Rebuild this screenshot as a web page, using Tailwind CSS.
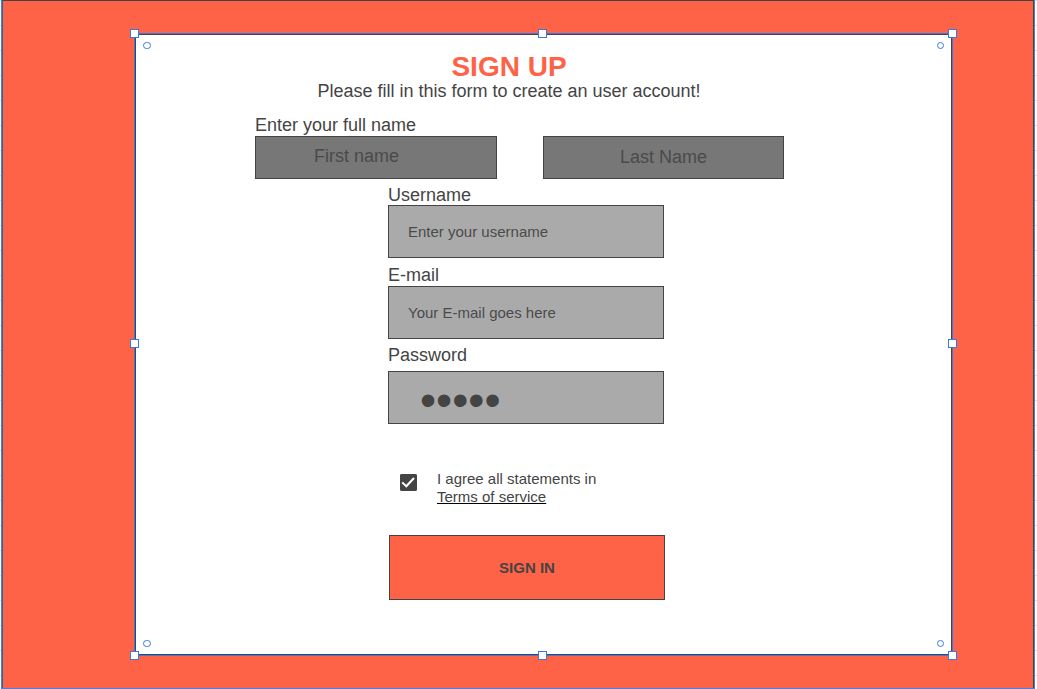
<!DOCTYPE html>
<html lang="en">
<head>
<meta charset="utf-8">
<meta name="viewport" content="width=device-width, initial-scale=1">
<title>Sign up</title>
<script src="https://cdn.jsdelivr.net/npm/@tailwindcss/browser@4"></script>
</head>
<body class="bg-white bg-[repeating-linear-gradient(to_bottom,#dfe1ea_0px,#dfe1ea_1px,transparent_1px,transparent_25px)] pl-px pr-0.5 font-['Liberation_Sans',Arial,sans-serif] text-[#444444]">
<main class="flex min-h-screen flex-col border-x border-b border-[#4a7fe8] bg-[#ff6347]">
  <div class="flex-1 border-x border-t border-t-[#444444] border-l-[#3a5f9f] border-r-[#444444] pt-8 pr-[80px] pb-8 pl-[131px]">
    <div class="relative border border-[#3b78e7]">
      <section class="border border-[#444444] bg-white pt-[18px] pr-[167px] pb-[54px] pl-[119px]">
        <header class="pr-[21px] text-center">
          <h1 class="text-[28px] leading-7 font-bold text-[#ff6347]">SIGN UP</h1>
          <p class="text-[18px] leading-5 whitespace-nowrap">Please fill in this form to create an user account!</p>
        </header>
        <form class="mt-3.5 text-[18px] leading-5">
          <label for="first" class="mb-px block">Enter your full name</label>
          <div class="grid grid-cols-[242fr_241fr] gap-[46px]">
            <input id="first" type="text" placeholder="First name" class="h-[43px] w-full border border-[#444444] bg-[#777777] pb-0.5 pl-[58px] outline-none placeholder:text-[#4a4a4a]">
            <input type="text" aria-label="Last name" placeholder="Last Name" class="h-[43px] w-full border border-[#444444] bg-[#777777] text-center outline-none placeholder:text-[#4a4a4a]">
          </div>
          <div class="mt-1.5 mr-[120px] ml-[133px]">
            <label for="user" class="block">Username</label>
            <input id="user" type="text" placeholder="Enter your username" class="block h-[53px] w-full border border-[#444444] bg-[#aaaaaa] px-[19px] text-[15px] outline-none placeholder:text-[#4a4a4a]">
            <label for="email" class="mt-[7px] mb-px block">E-mail</label>
            <input id="email" type="email" placeholder="Your E-mail goes here" class="block h-[53px] w-full border border-[#444444] bg-[#aaaaaa] px-[19px] text-[15px] outline-none placeholder:text-[#4a4a4a]">
            <label for="pass" class="mt-1.5 mb-1.5 block">Password</label>
            <input id="pass" type="password" value="12345" class="block h-[53px] w-full border border-[#444444] bg-[#aaaaaa] pt-1 pl-[31px] text-[46px] outline-none">
            <div class="mt-[46px] flex gap-5 pl-3 text-[15px] leading-[18px]">
              <span class="relative mt-1 size-[17px] shrink-0">
                <input id="agree" type="checkbox" checked class="peer block size-full appearance-none rounded-xs bg-white ring-1 ring-[#444444] ring-inset checked:bg-[#444444]">
                <svg class="pointer-events-none absolute inset-0 hidden peer-checked:block" viewBox="0 0 17 17" fill="none" stroke="#ffffff" stroke-width="2" aria-hidden="true"><path d="M2.2 8.4 6.3 12.3 14 4"/></svg>
              </span>
              <p><label for="agree">I agree all statements in</label><br><a href="#" class="underline decoration-black">Terms of service</a></p>
            </div>
            <button type="submit" class="mt-[29px] ml-px block h-[65px] w-full border border-[#444444] bg-[#ff6347] text-[15px] font-bold">SIGN IN</button>
          </div>
        </form>
      </section>
      <!-- Selection handles -->
      <div aria-hidden="true">
        <i class="absolute -top-[5px] -left-[5px] size-[9px] border border-[#3b78e7] bg-white"></i>
        <i class="absolute -top-[5px] right-0.5 left-0 mx-auto size-[9px] border border-[#3b78e7] bg-white"></i>
        <i class="absolute -top-[5px] -right-[5px] size-[9px] border border-[#3b78e7] bg-white"></i>
        <i class="absolute top-0 bottom-0.5 -left-[5px] my-auto size-[9px] border border-[#3b78e7] bg-white"></i>
        <i class="absolute top-0 -right-[5px] bottom-0.5 my-auto size-[9px] border border-[#3b78e7] bg-white"></i>
        <i class="absolute -bottom-[5px] -left-[5px] size-[9px] border border-[#3b78e7] bg-white"></i>
        <i class="absolute right-0.5 -bottom-[5px] left-0 mx-auto size-[9px] border border-[#3b78e7] bg-white"></i>
        <i class="absolute -right-[5px] -bottom-[5px] size-[9px] border border-[#3b78e7] bg-white"></i>
        <i class="absolute top-2 left-2 h-[7px] w-2 rounded-full border border-[#3b78e7]"></i>
        <i class="absolute top-2 right-2 size-[7px] rounded-full border border-[#3b78e7]"></i>
        <i class="absolute bottom-2 left-2 h-[7px] w-2 rounded-full border border-[#3b78e7]"></i>
        <i class="absolute right-2 bottom-2 size-[7px] rounded-full border border-[#3b78e7]"></i>
      </div>
    </div>
  </div>
</main>
</body>
</html>
